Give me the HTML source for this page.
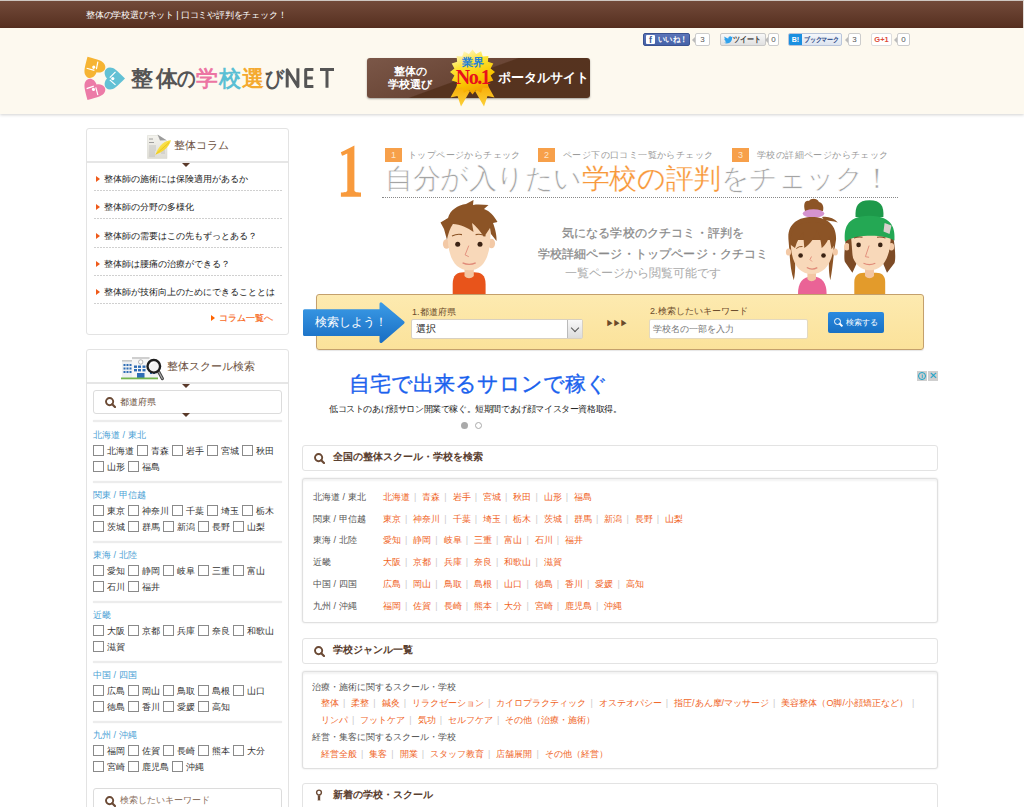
<!DOCTYPE html>
<html lang="ja"><head><meta charset="utf-8">
<style>
*{box-sizing:border-box;margin:0;padding:0}
html,body{width:1024px;height:807px;overflow:hidden;background:#fff;font-family:"Liberation Sans",sans-serif;color:#333}
.a{position:absolute;white-space:nowrap}
#topbar{position:absolute;left:0;top:0;width:1024px;height:28px;background:linear-gradient(#724a3a,#562f1f);border-top:1px solid #cdc6c1;border-right:1px solid #e0dbd6}
#topbar .t{position:absolute;left:86px;top:7.5px;font-size:9px;color:#fff;line-height:12px;letter-spacing:-0.2px}
#hdr{position:absolute;left:0;top:28px;width:1024px;height:86px;background:#fdf9ef;box-shadow:0 1px 3px rgba(0,0,0,.18)}
.logotxt{position:absolute;left:132px;top:64px;width:160px;height:30px;font-size:22px;font-weight:bold;line-height:30px;color:#555}
.banner{position:absolute;left:367px;top:58px;width:223px;height:40px;border-radius:3px;background:linear-gradient(160deg,#7b5748 0%,#6a4636 45%,#56331f 46%,#55331f 100%);box-shadow:0 1px 2px rgba(0,0,0,.35)}
.banner .l{position:absolute;left:21px;top:7px;width:44px;text-align:center;color:#fff;font-size:10.5px;font-weight:bold;line-height:13px}
.banner .r{position:absolute;left:131px;top:13px;color:#fff;font-size:12.5px;font-weight:bold;line-height:15px}
.sb{position:absolute;top:33px;height:13px;border-radius:2px;font-size:8px;font-weight:bold;line-height:11px;white-space:nowrap;overflow:hidden}
.cnt{position:absolute;top:33px;height:13px;border:1px solid #ccc;background:#fff;border-radius:2px;font-size:8px;color:#555;text-align:center;line-height:11px}
.cnt:before{content:"";position:absolute;left:-4px;top:3px;border:3px solid transparent;border-right-color:#bbb;border-left:0}

.box{position:absolute;left:86px;width:203px;border:1px solid #e3e3e3;border-radius:3px;background:#fff}
.boxh{position:absolute;left:0;top:0;width:201px;border-bottom:2px solid #e6e6e6}
.boxh .tri{position:absolute;left:95px;bottom:-6px;border:4px solid transparent;border-top:4px solid #5a3a2a;border-bottom:0}
.boxh .tt{position:absolute;font-size:11px;color:#6b5040;line-height:14px}
.col li{position:absolute;left:7px;width:188px;list-style:none;font-size:8.8px;color:#222;line-height:12px;height:1px;background:repeating-linear-gradient(90deg,#d0d0d0 0 2px,transparent 2px 3px)}
.arr{display:inline-block;border:3px solid transparent;border-left:4px solid #ef5a1a;border-right:0;margin:0 4px 0 1px;vertical-align:0}
.sbox{position:absolute;left:6px;width:189px;height:24px;border:1px solid #dcdcdc;border-radius:3px;background:#fff;font-size:9px;color:#6b5040;line-height:22px}
.region{position:absolute;left:6px;font-size:9px;color:#4b9fd5;line-height:12px}
.sep{position:absolute;left:6px;width:189px;height:2px;margin-top:1px;background:#ececec;box-shadow:0 0 1.5px #eee}
.cbrow{position:absolute;left:6px;font-size:9px;color:#333;line-height:12px;white-space:nowrap}
.cb{display:inline-block;width:11px;height:11px;border:1px solid #8a8a8a;vertical-align:-2px;margin-right:3px;background:#fff}
.cbrow span{margin-right:3px}
.mag{display:inline-block;position:relative;width:11px;height:11px}



.sq{position:absolute;top:148px;width:17px;height:14px;background:#f7a04a;color:#fde6cc;font-size:9px;line-height:14px;text-align:center;font-weight:normal}
.sqt{position:absolute;top:150px;font-size:9px;letter-spacing:0.4px;color:#999;line-height:11px}
.ttl{position:absolute;left:385px;top:163px;font-size:27.5px;letter-spacing:-0.45px;color:#a4a4a4;-webkit-text-stroke:0.6px #fff;line-height:32px;font-weight:normal}
.desc{position:absolute;left:500px;width:306px;text-align:center;font-size:12px;color:#8a8a8a;line-height:14px;font-weight:normal;-webkit-text-stroke:0.25px #8a8a8a;letter-spacing:0.15px}
.sbar{position:absolute;left:316px;top:294px;width:608px;height:56px;border:1px solid #c4a06c;border-radius:3px;background:linear-gradient(#fdeab0,#fbe29a);box-shadow:0 1px 1px rgba(0,0,0,.1)}
.lbl{position:absolute;font-size:9px;color:#6b4a2a;line-height:11px}

.sech{position:absolute;left:302px;width:636px;height:26px;border:1px solid #e3e3e3;border-radius:3px;background:#fff;font-size:10px;font-weight:bold;color:#5a4030;line-height:24px}
.sech .mag{position:absolute;left:11px;top:6.5px}
.sech .st{position:absolute;left:30px;top:-1px}
.secb{position:absolute;left:302px;width:636px;border:1px solid #e0e0e0;border-radius:3px;background:#fff;box-shadow:0 0 2px rgba(0,0,0,.12),inset 0 2px 2px rgba(0,0,0,.05)}
.prow{position:absolute;left:10px;font-size:9px;line-height:12px;white-space:nowrap}
.prow b{display:inline-block;width:70px;font-weight:normal;color:#555}
.lk{color:#f0641e}
.lk i{font-style:normal;color:#ccc;margin:0 6px 0 4px}
.glbl{position:absolute;left:9px;font-size:9px;color:#555;line-height:12px;white-space:nowrap}
.grow{position:absolute;left:18px;font-size:9px;line-height:12px;white-space:nowrap}
</style></head><body>
<div id="topbar"><div class="t">整体の学校選びネット | 口コミや評判をチェック！</div></div>
<div id="hdr"></div>

<!-- logo icon -->
<svg class="a" style="left:82px;top:54px" width="46" height="48" viewBox="0 0 46 48">
 <g transform="translate(18,24.4)">
  <g transform="rotate(0)"><path d="M7,0 C3,-4 4,-11 10,-11 C14,-11 17,-8 25,0 C17,8 14,11 10,11 C4,11 3,4 7,0 Z" fill="#62c1d5"/><path d="M15.5,-6.5 L9.8,-0.8 M9.8,1.5 L15.5,6.5" stroke="#fff" stroke-width="1.2" fill="none"/><circle cx="12.8" cy="0.2" r="1.6" fill="#fff"/></g>
  <g transform="rotate(-120)"><path d="M7,0 C3,-4 4,-11 10,-11 C14,-11 17,-8 25,0 C17,8 14,11 10,11 C4,11 3,4 7,0 Z" fill="#f6b433"/><path d="M15.5,-6.5 L9.8,-0.8 M9.8,1.5 L15.5,6.5" stroke="#fff" stroke-width="1.2" fill="none"/><circle cx="12.8" cy="0.2" r="1.6" fill="#fff"/></g>
  <g transform="rotate(120)"><path d="M7,0 C3,-4 4,-11 10,-11 C14,-11 17,-8 25,0 C17,8 14,11 10,11 C4,11 3,4 7,0 Z" fill="#ec7ba7"/><path d="M15.5,-6.5 L9.8,-0.8 M9.8,1.5 L15.5,6.5" stroke="#fff" stroke-width="1.2" fill="none"/><circle cx="12.8" cy="0.2" r="1.6" fill="#fff"/></g>
 </g>
</svg>
<div class="logotxt"><span style="position:absolute;left:-1.1px;top:0;color:#555">整</span><span style="position:absolute;left:23.5px;top:0;color:#555">体</span><span style="position:absolute;left:45.0px;top:0;color:#555;transform:scaleX(0.84);transform-origin:0 0">の</span><span style="position:absolute;left:63.5px;top:0;color:#ec75a3">学</span><span style="position:absolute;left:87.1px;top:0;color:#5bbfd4">校</span><span style="position:absolute;left:109.6px;top:0;color:#f4aa30">選</span><span style="position:absolute;left:133.2px;top:0;color:#555;transform:scaleX(0.86);transform-origin:0 0">び</span></div><svg class="a" style="left:280px;top:60px" width="60" height="32" viewBox="280 60 60 32"><g stroke="#555" stroke-width="3" fill="none" stroke-linecap="butt" stroke-linejoin="round"><path d="M287.2,87.5 V69.8 L297.9,86.6 V68.2"/><path d="M313.4,69.5 H305.7 V86.4 H313.4 M305.7,78 H312.8"/><path d="M320,69.5 H334 M327,69.5 V87.7"/></g></svg>

<!-- banner -->
<div class="banner">
  <div class="l">整体の<br>学校選び</div>
  <div class="r">ポータルサイト</div>
</div>
<svg class="a" style="left:440px;top:44px" width="64" height="68" viewBox="0 0 64 68">
  <defs><linearGradient id="gs" x1="0.2" y1="0" x2="0.6" y2="1"><stop offset="0" stop-color="#fffbe0"/><stop offset="0.35" stop-color="#fde233"/><stop offset="0.7" stop-color="#f9c400"/><stop offset="1" stop-color="#f39a00"/></linearGradient>
  <linearGradient id="gr" x1="0" y1="0" x2="0" y2="1"><stop offset="0" stop-color="#f7a800"/><stop offset="1" stop-color="#fcd23a"/></linearGradient></defs>
  <polygon points="18,40 10.5,53.5 17.5,52 21,62.5 30,47" fill="url(#gr)"/>
  <polygon points="47,40 54.5,53.5 47.5,52 44,62.5 35,47" fill="url(#gr)"/>
  <polygon points="32.5,5.5 36.1,9.9 41.1,7.2 42.8,12.6 48.4,12.1 47.9,17.7 53.3,19.4 50.6,24.4 55.0,28.0 50.6,31.6 53.3,36.6 47.9,38.3 48.4,43.9 42.8,43.4 41.1,48.8 36.1,46.1 32.5,50.5 28.9,46.1 23.9,48.8 22.2,43.4 16.6,43.9 17.1,38.3 11.7,36.6 14.4,31.6 10.0,28.0 14.4,24.4 11.7,19.4 17.1,17.7 16.6,12.1 22.2,12.6 23.9,7.2 28.9,9.9" fill="url(#gs)"/>
  <text x="32.5" y="21.5" style="font:bold 11px 'Liberation Sans'" fill="#1f80d8" text-anchor="middle">業界</text>
  <text x="32.5" y="39.5" style="font:bold 20px 'Liberation Serif'" fill="#e8101c" text-anchor="middle" letter-spacing="-1.5">No.1</text>
</svg>

<!-- social -->
<div class="sb" style="left:643px;width:47px;background:linear-gradient(#5b74b8,#4562a8);color:#fff;border:1px solid #3b5290"><span style="display:inline-block;width:9px;height:9px;background:#fff;color:#3b5998;font-size:9px;line-height:10px;text-align:center;margin:1px 3px 0 2px;vertical-align:top;border-radius:1px;font-weight:bold">f</span><span style="display:inline-block;transform:scaleX(0.92);transform-origin:0 0">いいね！</span></div>
<div class="cnt" style="left:695px;width:15px">3</div>
<div class="sb" style="left:720px;width:46px;background:linear-gradient(#f8f8f8,#e0e0e0);border:1px solid #c8c8c8;color:#333"><svg style="position:absolute;left:3px;top:2px" width="9" height="8" viewBox="0 0 24 20"><path d="M24 2.4c-.9.4-1.8.6-2.8.8 1-.6 1.8-1.6 2.2-2.7-1 .6-2 1-3.1 1.2C19.3.7 18 0 16.6 0c-2.7 0-4.9 2.2-4.9 4.9 0 .4 0 .8.1 1.1C7.7 5.8 4.1 3.9 1.7.9c-.4.7-.7 1.6-.7 2.5 0 1.7.9 3.2 2.2 4.1-.8 0-1.6-.2-2.2-.6v.1c0 2.4 1.7 4.4 3.9 4.8-.4.1-.8.2-1.3.2-.3 0-.6 0-.9-.1.6 2 2.4 3.4 4.6 3.4-1.7 1.3-3.8 2.1-6.1 2.1-.4 0-.8 0-1.2-.1 2.2 1.4 4.8 2.2 7.5 2.2 9.1 0 14-7.5 14-14v-.6c1-.7 1.8-1.6 2.5-2.5z" fill="#2ea1ec"/></svg><span style="position:absolute;left:12px;top:0;transform:scaleX(0.88);transform-origin:0 0">ツイート</span></div>
<div class="cnt" style="left:768px;width:11px">0</div>
<div class="sb" style="left:788px;width:54px;background:linear-gradient(#f5f7fb,#dde4ef);border:1px solid #b9c5da;color:#2b4a88;font-size:7px;letter-spacing:-0.3px"><span style="position:absolute;left:0;top:0;width:13px;height:11px;background:#1a8fe0;color:#fff;font-size:7px;line-height:11px;text-align:center;letter-spacing:0">B!</span><span style="position:absolute;left:15px;top:0;transform:scaleX(0.86);transform-origin:0 0">ブックマーク</span></div>
<div class="cnt" style="left:848px;width:13px">3</div>
<div class="sb" style="left:871px;width:21px;background:#fff;border:1px solid #ddd;color:#dd4b39;text-align:center;font-size:7.5px">G+1</div>
<div class="cnt" style="left:897px;width:13px">0</div>


<!-- column box -->
<div class="box col" style="top:128px;height:207px">
  <div class="boxh" style="height:34px"><div class="tri"></div>
    <svg class="a" style="left:60px;top:5px" width="25" height="26" viewBox="0 0 25 26">
      <defs><linearGradient id="pp" x1="0" y1="0" x2="0" y2="1"><stop offset="0" stop-color="#f4f3ee"/><stop offset="1" stop-color="#dedcd4"/></linearGradient>
      <linearGradient id="fy" x1="0" y1="0" x2="1" y2="1"><stop offset="0" stop-color="#fff27a"/><stop offset="1" stop-color="#efc400"/></linearGradient></defs>
      <path d="M0.5 1.5 L11 1.5 L20 7 L20 24.5 L0.5 24.5 Z" fill="url(#pp)" stroke="#d6d6cc" stroke-width="0.5"/>
      <path d="M10.5 0.5 L19.5 6.3 L13 6.5 Z" fill="#9c9c9c"/>
      <g stroke="#8a8a8a" stroke-width="0.8"><path d="M2 5 h4"/><path d="M2 8.5 h5"/></g>
      <g stroke="#b4b4b4" stroke-width="0.7"><path d="M2 12 h7 M2 14 h7 M2 16 h7 M2 18 h6 M2 20 h6 M2 22 h6 M14 17 h4 M14 19 h4"/></g>
      <path d="M24 6.3 C18 6.5 12 11 8.6 20.5 C14 19 22 14 24 6.3 Z" fill="url(#fy)"/>
      <path d="M22 8.5 L8.6 20.5" stroke="#e0b000" stroke-width="0.5"/>
    </svg>
    <div class="tt" style="left:87px;top:9px">整体コラム</div>
  </div>
  <ul>
    <li style="top:61px"><div style="position:absolute;top:-17px;left:1px"><i class="arr"></i>整体師の施術には保険適用があるか</div></li>
    <li style="top:89px"><div style="position:absolute;top:-17px;left:1px"><i class="arr"></i>整体師の分野の多様化</div></li>
    <li style="top:118px"><div style="position:absolute;top:-17px;left:1px"><i class="arr"></i>整体師の需要はこの先もずっとある？</div></li>
    <li style="top:146px"><div style="position:absolute;top:-17px;left:1px"><i class="arr"></i>整体師は腰痛の治療ができる？</div></li>
    <li style="top:174px"><div style="position:absolute;top:-17px;left:1px"><i class="arr"></i>整体師が技術向上のためにできることとは</div></li>
  </ul>
  <div class="a" style="left:123px;top:183px;font-size:9px;color:#f86a1e;line-height:12px;-webkit-text-stroke:0.2px #f86a1e"><i class="arr" style="border-left-color:#ff6400"></i>コラム一覧へ</div>
</div>

<!-- school search box -->
<div class="box" style="top:349px;height:480px">
  <div class="boxh" style="height:34px"><div class="tri"></div>
    <svg class="a" style="left:34px;top:6px" width="43" height="25" viewBox="0 0 43 25">
      <rect x="1" y="4" width="10.5" height="18" fill="#eef0f2"/><rect x="1" y="4" width="10.5" height="1.6" fill="#c8c8c8"/>
      <rect x="28" y="8" width="9" height="14" fill="#eef0f2"/>
      <rect x="11" y="1" width="17.5" height="21" fill="#f6f6f6"/><rect x="11" y="1" width="17.5" height="2" fill="#cfcfcf"/>
      <circle cx="19.7" cy="6" r="2.2" fill="#fff" stroke="#888" stroke-width="0.6"/>
      <g fill="#2f6db5"><rect x="2.5" y="8" width="2" height="2"/><rect x="2.5" y="11.5" width="2" height="2"/><rect x="2.5" y="15" width="2" height="2"/><rect x="5.5" y="8" width="2" height="2"/><rect x="5.5" y="11.5" width="2" height="2"/><rect x="5.5" y="15" width="2" height="2"/><rect x="8.5" y="8" width="2" height="2"/><rect x="8.5" y="11.5" width="2" height="2"/><rect x="8.5" y="15" width="2" height="2"/><rect x="13" y="9.5" width="3" height="2.4"/><rect x="13" y="13" width="3" height="2.4"/><rect x="17" y="9.5" width="3" height="2.4"/><rect x="17" y="13" width="3" height="2.4"/><rect x="21.5" y="9.5" width="3" height="2.4"/><rect x="21.5" y="13" width="3" height="2.4"/><rect x="29" y="12" width="2" height="2"/><rect x="29" y="16" width="2" height="2"/><rect x="32" y="12" width="2" height="2"/><rect x="32" y="16" width="2" height="2"/><rect x="16" y="17" width="7.5" height="5"/></g>
      <rect x="0" y="21.5" width="37" height="1.8" fill="#74b54e"/>
      <path d="M37 14.5 L41.3 22.5" stroke="#444" stroke-width="3.2" stroke-linecap="round"/>
      <path d="M37 14.5 L41.3 22.5" stroke="#aaa" stroke-width="1.2" stroke-linecap="round"/>
      <circle cx="32.8" cy="10.3" r="6.3" fill="#f2f2f2" stroke="#1e1e1e" stroke-width="2.4"/>
      <path d="M29.5 8.5 Q31 6.3 33.5 6.2" stroke="#fff" stroke-width="1.2" fill="none"/>
    </svg>
    <div class="tt" style="left:80px;top:9px">整体スクール検索</div>
  </div>
  <div class="sbox" style="top:40px"><span style="position:absolute;left:11px;top:6px" class="mag"><svg width="11" height="11" viewBox="0 0 11 11" style="display:block"><circle cx="4.6" cy="4.6" r="3.6" fill="none" stroke="#6b4a35" stroke-width="1.9"/><path d="M7.2 7.2 L10 10" stroke="#6b4a35" stroke-width="2.2" stroke-linecap="round"/></svg></span><span style="position:absolute;left:26px;top:0">都道府県</span></div>
  <div class="a" style="left:95px;top:63px;border:4px solid transparent;border-top:4px solid #5a3a2a;border-bottom:0"></div>
  <div class="sep" style="top:69px"></div>
  <div class="region" style="top:79px">北海道 / 東北</div>
  <div class="cbrow" style="top:95px"><i class="cb"></i><span>北海道</span><i class="cb"></i><span>青森</span><i class="cb"></i><span>岩手</span><i class="cb"></i><span>宮城</span><i class="cb"></i><span>秋田</span></div>
  <div class="cbrow" style="top:111px"><i class="cb"></i><span>山形</span><i class="cb"></i><span>福島</span></div>
  <div class="sep" style="top:130px"></div>
  <div class="region" style="top:139px">関東 / 甲信越</div>
  <div class="cbrow" style="top:155px"><i class="cb"></i><span>東京</span><i class="cb"></i><span>神奈川</span><i class="cb"></i><span>千葉</span><i class="cb"></i><span>埼玉</span><i class="cb"></i><span>栃木</span></div>
  <div class="cbrow" style="top:171px"><i class="cb"></i><span>茨城</span><i class="cb"></i><span>群馬</span><i class="cb"></i><span>新潟</span><i class="cb"></i><span>長野</span><i class="cb"></i><span>山梨</span></div>
  <div class="sep" style="top:190px"></div>
  <div class="region" style="top:199px">東海 / 北陸</div>
  <div class="cbrow" style="top:215px"><i class="cb"></i><span>愛知</span><i class="cb"></i><span>静岡</span><i class="cb"></i><span>岐阜</span><i class="cb"></i><span>三重</span><i class="cb"></i><span>富山</span></div>
  <div class="cbrow" style="top:231px"><i class="cb"></i><span>石川</span><i class="cb"></i><span>福井</span></div>
  <div class="sep" style="top:250px"></div>
  <div class="region" style="top:259px">近畿</div>
  <div class="cbrow" style="top:275px"><i class="cb"></i><span>大阪</span><i class="cb"></i><span>京都</span><i class="cb"></i><span>兵庫</span><i class="cb"></i><span>奈良</span><i class="cb"></i><span>和歌山</span></div>
  <div class="cbrow" style="top:291px"><i class="cb"></i><span>滋賀</span></div>
  <div class="sep" style="top:310px"></div>
  <div class="region" style="top:319px">中国 / 四国</div>
  <div class="cbrow" style="top:335px"><i class="cb"></i><span>広島</span><i class="cb"></i><span>岡山</span><i class="cb"></i><span>鳥取</span><i class="cb"></i><span>島根</span><i class="cb"></i><span>山口</span></div>
  <div class="cbrow" style="top:351px"><i class="cb"></i><span>徳島</span><i class="cb"></i><span>香川</span><i class="cb"></i><span>愛媛</span><i class="cb"></i><span>高知</span></div>
  <div class="sep" style="top:370px"></div>
  <div class="region" style="top:379px">九州 / 沖縄</div>
  <div class="cbrow" style="top:395px"><i class="cb"></i><span>福岡</span><i class="cb"></i><span>佐賀</span><i class="cb"></i><span>長崎</span><i class="cb"></i><span>熊本</span><i class="cb"></i><span>大分</span></div>
  <div class="cbrow" style="top:411px"><i class="cb"></i><span>宮崎</span><i class="cb"></i><span>鹿児島</span><i class="cb"></i><span>沖縄</span></div>
  <div class="sbox" style="top:438px;height:30px"><span style="position:absolute;left:11px;top:7px" class="mag"><svg width="11" height="11" viewBox="0 0 11 11" style="display:block"><circle cx="4.6" cy="4.6" r="3.6" fill="none" stroke="#6b4a35" stroke-width="1.9"/><path d="M7.2 7.2 L10 10" stroke="#6b4a35" stroke-width="2.2" stroke-linecap="round"/></svg></span><span style="position:absolute;left:26px;top:0px;color:#8a7060">検索したいキーワード</span></div>
</div>

<!-- hero -->
<svg class="a" style="left:335px;top:140px" width="30" height="60" viewBox="0 0 30 60"><path d="M19.4,5.4 L19.4,50 C19.4,52 21,52.3 26,52.5 L26,56.8 L5.9,56.8 L5.9,52.5 C11,52.3 12.3,52 12.3,50 L12.3,13.5 C10,14.5 8,15.5 7,15.8 L5.8,12.3 C10,10 15,8 19.4,5.4 Z" fill="#f89a3c"/></svg>
<div class="sq" style="left:385px">1</div><div class="sqt" style="left:408px">トップページからチェック</div>
<div class="sq" style="left:538px">2</div><div class="sqt" style="left:563px">ページ下の口コミ一覧からチェック</div>
<div class="sq" style="left:732px">3</div><div class="sqt" style="left:757px">学校の詳細ページからチェック</div>
<div class="ttl a">自分が入りたい<span style="color:#f8983a;-webkit-text-stroke:0.2px #fff">学校の評判</span>をチェック！</div>
<div class="a" style="left:382px;top:197px;width:516px;border-top:1px dotted #888"></div>

<div class="desc a" style="top:226px">気になる学校のクチコミ・評判を</div>
<div class="desc a" style="top:247px">学校詳細ページ・トップページ・クチコミ</div>
<div class="desc a" style="top:266px;left:490px;color:#aaa;-webkit-text-stroke:0;letter-spacing:0">一覧ページから閲覧可能です</div>

<!-- boy -->
<svg class="a" style="left:436px;top:196px" width="66" height="98" viewBox="0 0 66 98">
  <path d="M16.7,98 L16.7,88 C16.7,79 21,76.2 28,76.2 L38,76.2 C45,76.2 49.6,79 49.6,88 L49.6,98 Z" fill="#e8541b"/>
  <path d="M28.5,70 L37.8,70 L37.8,80 C35,83 31,83 28.5,80 Z" fill="#f3c6a3"/>
  <ellipse cx="10.5" cy="48" rx="3.6" ry="4.8" fill="#f3c9a6"/>
  <ellipse cx="55.5" cy="47.5" rx="3.6" ry="4.8" fill="#f3c9a6"/>
  <path d="M11.5,34 C11,58 17,74.3 33.3,74.3 C49,74.3 55,58 54.5,34 C50,22 16,22 11.5,34 Z" fill="#f8d8b9"/>
  <path d="M11,44 L8,33 L4.5,26.5 L12,22 C14,14 22,9 30,8 L37.5,4 L37,9 C43,8 48,9 52.5,9 L48,13 C54,15 58,20 61.5,26 L57,27 C59,32 61,40 60.5,45 L55,38 L54,32 L48,41 C45,36 40,30 36,27 L37.5,36 C32,32 24,28 17,28 C14,32 12,38 11,44 Z" fill="#8c5426"/>
  <circle cx="21.7" cy="48.3" r="2.5" fill="#3b2314"/><circle cx="44" cy="48.3" r="2.5" fill="#3b2314"/>
  <path d="M16,40 Q21,37.5 26,38.6 M39.6,38.6 Q45,37.5 49.6,40" stroke="#8c5426" stroke-width="1.1" fill="none"/>
  <path d="M32.8,49.6 L29.1,58.9 L32.8,60.7" stroke="#e08a78" stroke-width="0.9" fill="none"/>
  <path d="M26.6,66.9 Q33.2,70 39.7,66.9" stroke="#e08a78" stroke-width="1.2" fill="none"/>
</svg>
<!-- girl -->
<svg class="a" style="left:782px;top:196px" width="60" height="98" viewBox="0 0 60 98">
  <path d="M16,98 C16,87 20,80.5 30.3,80.5 C40.6,80.5 44.6,87 44.6,98 Z" fill="#ea6396"/>
  <path d="M25.4,74 L34,74 L34,83 C31,86 28,86 25.4,83 Z" fill="#f3c6a3"/>
  <path d="M23,15 C21,8 23,4 27,5 C29,2 35,2 37,6 C41,7 42,11 41,15 Z" fill="#8c5426"/>
  <ellipse cx="31.5" cy="17.5" rx="10.8" ry="4.3" fill="#d493cf"/>
  <path d="M6.5,44 C5,28 16,21 30,21 C44,21 55,28 54,44 L52,56 C51,66 50,76 48.3,84.3 C46,74 47,62 47.5,54 L13,54 C13,62 14,74 11.8,84.3 C9,76 8,66 7.5,56 Z" fill="#8c5426"/>
  <path d="M40,21 C46,20 52,22 55.8,26.6 C51,25 46,24.5 42,24 Z" fill="#8c5426"/>
  <ellipse cx="6.5" cy="56" rx="2.6" ry="3.6" fill="#f3c9a6"/><ellipse cx="53.3" cy="56" rx="2.6" ry="3.6" fill="#f3c9a6"/>
  <path d="M8.7,44 C8.5,66 16,78 29.7,78 C43,78 52,66 52,44 Z" fill="#f8d8b9"/>
  <path d="M7.5,48 C8,34 16,26 30,26 C44,26 53,34 53,48 L49.6,53.3 L47,40 C46,46 42,50 39.7,52 C39,44 37,38 35,34 C33,42 28,48 22.3,52 L21,36 C18,40 15,45 13,52 Z" fill="#8c5426"/>
  <circle cx="18.6" cy="59.5" r="2.3" fill="#3b2314"/><circle cx="41.5" cy="59.5" r="2.3" fill="#3b2314"/>
  <path d="M14.3,52.5 Q17,50 20.5,50.5" stroke="#8c5426" stroke-width="1" fill="none"/>
  <path d="M29.5,60.5 L28,63.5 L30,65.5" stroke="#e08a78" stroke-width="0.9" fill="none"/>
  <path d="M24.8,71.6 Q30,74.5 35.3,71.6" stroke="#e08a78" stroke-width="1.2" fill="none"/>
</svg>
<!-- girl with hat -->
<svg class="a" style="left:840px;top:196px" width="60" height="98" viewBox="0 0 60 98">
  <path d="M14.3,98 L14.3,86 C14.3,80 18,76.8 24,76.8 L36,76.8 C42,76.8 45.2,80 45.2,86 L45.2,98 Z" fill="#e39b2b"/>
  <path d="M25,72 L34,72 L34,80 C31,83 28,83 25,80 Z" fill="#f3c6a3"/>
  <path d="M6,42 C4,56 4,64 5,66 L12.4,76.8 L20,60 L40,60 L47,76.8 L54.5,67 C56,62 55,52 53.5,42 Z" fill="#7d4b26"/>
  <ellipse cx="6.8" cy="50.8" rx="2.8" ry="3.8" fill="#f3c9a6"/><ellipse cx="51.4" cy="50.8" rx="2.8" ry="3.8" fill="#f3c9a6"/>
  <path d="M9.3,38 C9,62 17,74.3 29.7,74.3 C43,74.3 50.8,62 50.8,38 Z" fill="#f8d8b9"/>
  <path d="M9,40 L11,40 L13.5,72 C11,68 9.5,60 9,54 Z" fill="#7d4b26"/>
  <path d="M15.5,21 C15,10 18,4.3 29.5,4.3 C41,4.3 44,10 43.4,21 Z" fill="#1d994a"/>
  <path d="M5,45.8 C4,34 5,20 29.5,19.8 C54,20 55,34 54.5,44.6 C44,38 16,38 5,45.8 Z" fill="#24a854"/>
  <path d="M44.6,27 L51.5,29.5 L49.5,38 L43.5,35.5 Z" fill="#d9d0cc"/>
  <path d="M14,42 Q18,40.5 22.5,41.2 M37,41.2 Q41.5,40.5 45.5,42" stroke="#7d4b26" stroke-width="1.1" fill="none"/>
  <circle cx="18.6" cy="48.9" r="2.3" fill="#3b2314"/><circle cx="40.3" cy="48.9" r="2.3" fill="#3b2314"/>
  <path d="M29.1,49.6 L25.4,60.7 L29.1,61.3" stroke="#e08a78" stroke-width="0.9" fill="none"/>
  <path d="M23.5,67.3 Q29.4,70 35.3,67.3" stroke="#e08a78" stroke-width="1.2" fill="none"/>
</svg>

<!-- search bar -->
<div class="sbar"></div>
<svg class="a" style="left:303px;top:302px" width="102" height="41" viewBox="0 0 102 41">
  <defs><linearGradient id="bg1" x1="0" y1="0" x2="0" y2="1"><stop offset="0" stop-color="#3a9ae6"/><stop offset="1" stop-color="#1a6fc4"/></linearGradient></defs>
  <path d="M1.5 8.8 L78 8.8 L78 1.8 L100 20.5 L78 39.5 L78 32.5 L1.5 32.5 Z" fill="url(#bg1)" stroke="url(#bg1)" stroke-width="3" stroke-linejoin="round"/>
</svg>
<div class="a" style="left:315px;top:314px;font-size:11.5px;color:#fff;line-height:16px">検索しよう！</div>
<div class="lbl a" style="left:412px;top:307px">1.都道府県</div>
<div class="a" style="left:411px;top:319px;width:172px;height:20px;background:#fff;border:1px solid #d8d0c0;border-radius:2px;font-size:10px;color:#222;line-height:18px;padding-left:4px">選択
  <div style="position:absolute;right:0;top:0;width:15px;height:18px;background:linear-gradient(#f8f8f8,#dcdcdc);border-left:1px solid #bbb"><div style="position:absolute;left:4px;top:5px;width:6px;height:6px;border-right:1.5px solid #555;border-bottom:1.5px solid #555;transform:rotate(45deg)"></div></div>
</div>
<div class="a" style="left:606px;top:319px;font-size:8px;color:#6b4a2a;line-height:9px;letter-spacing:-1px">&#9654;&#9654;&#9654;</div>
<div class="lbl a" style="left:650px;top:306px">2.検索したいキーワード</div>
<div class="a" style="left:649px;top:319px;width:159px;height:20px;background:#fff;border:1px solid #e3d9c0;border-radius:2px;font-size:9px;color:#777;line-height:18px;padding-left:3px">学校名の一部を入力</div>
<div class="a" style="left:828px;top:312px;width:56px;height:21px;border-radius:2px;background:linear-gradient(#2b8ae0,#1870c4);color:#fff;font-size:8px;line-height:21px;padding-left:18px">検索する
  <span style="position:absolute;left:6px;top:6px;width:7px;height:7px;border:1.6px solid #fff;border-radius:50%"></span><span style="position:absolute;left:12px;top:11px;width:1.8px;height:4px;background:#fff;transform:rotate(-45deg)"></span>
</div>

<!-- ad -->
<div class="a" style="left:349px;top:371px;font-size:21px;color:#1a62ee;line-height:26px;font-weight:normal;-webkit-text-stroke:0.35px #1a62ee">自宅で出来るサロンで稼ぐ</div>
<div class="a" style="left:329px;top:403px;font-size:9px;color:#222;line-height:12px;letter-spacing:-0.4px">低コストのあげ顔サロン開業で稼ぐ。短期間であげ顔マイスター資格取得。</div>
<div class="a" style="left:461px;top:422px;width:7px;height:7px;border-radius:50%;background:#aaa"></div>
<div class="a" style="left:475px;top:422px;width:7px;height:7px;border-radius:50%;border:1px solid #aaa"></div>
<div class="a" style="left:917px;top:371px;width:10px;height:10px;background:#cfcfcf"><div style="position:absolute;left:1px;top:1px;width:8px;height:8px;border:1px solid #1aa3c8;border-radius:50%;font-size:6px;line-height:6px;text-align:center;color:#1aa3c8;font-weight:bold">i</div></div>
<div class="a" style="left:928px;top:371px;width:10px;height:10px;background:#cfcfcf;color:#1aa3c8;font-size:10px;line-height:10px;text-align:center">&#10005;</div>

<!-- school search section -->
<div class="sech" style="top:445px"><span class="mag"><svg width="11" height="11" viewBox="0 0 11 11" style="display:block"><circle cx="4.6" cy="4.6" r="3.6" fill="none" stroke="#6b4a35" stroke-width="1.9"/><path d="M7.2 7.2 L10 10" stroke="#6b4a35" stroke-width="2.2" stroke-linecap="round"/></svg></span><span class="st">全国の整体スクール・学校を検索</span></div>
<div class="secb" style="top:478px;height:145px">
  <div class="prow" style="top:12px"><b>北海道 / 東北</b><span class="lk">北海道<i>|</i>青森<i>|</i>岩手<i>|</i>宮城<i>|</i>秋田<i>|</i>山形<i>|</i>福島</span></div>
  <div class="prow" style="top:34px"><b>関東 / 甲信越</b><span class="lk">東京<i>|</i>神奈川<i>|</i>千葉<i>|</i>埼玉<i>|</i>栃木<i>|</i>茨城<i>|</i>群馬<i>|</i>新潟<i>|</i>長野<i>|</i>山梨</span></div>
  <div class="prow" style="top:55px"><b>東海 / 北陸</b><span class="lk">愛知<i>|</i>静岡<i>|</i>岐阜<i>|</i>三重<i>|</i>富山<i>|</i>石川<i>|</i>福井</span></div>
  <div class="prow" style="top:77px"><b>近畿</b><span class="lk">大阪<i>|</i>京都<i>|</i>兵庫<i>|</i>奈良<i>|</i>和歌山<i>|</i>滋賀</span></div>
  <div class="prow" style="top:99px"><b>中国 / 四国</b><span class="lk">広島<i>|</i>岡山<i>|</i>鳥取<i>|</i>島根<i>|</i>山口<i>|</i>徳島<i>|</i>香川<i>|</i>愛媛<i>|</i>高知</span></div>
  <div class="prow" style="top:121px"><b>九州 / 沖縄</b><span class="lk">福岡<i>|</i>佐賀<i>|</i>長崎<i>|</i>熊本<i>|</i>大分<i>|</i>宮崎<i>|</i>鹿児島<i>|</i>沖縄</span></div>
</div>

<!-- genre section -->
<div class="sech" style="top:638px"><span class="mag"><svg width="11" height="11" viewBox="0 0 11 11" style="display:block"><circle cx="4.6" cy="4.6" r="3.6" fill="none" stroke="#6b4a35" stroke-width="1.9"/><path d="M7.2 7.2 L10 10" stroke="#6b4a35" stroke-width="2.2" stroke-linecap="round"/></svg></span><span class="st">学校ジャンル一覧</span></div>
<div class="secb" style="top:671px;height:98px">
  <div class="glbl" style="top:9px">治療・施術に関するスクール・学校</div>
  <div class="grow lk" style="top:25px">整体<i>|</i>柔整<i>|</i>鍼灸<i>|</i>リラクゼーション<i>|</i>カイロプラクティック<i>|</i>オステオパシー<i>|</i>指圧/あん摩/マッサージ<i>|</i>美容整体（O脚/小顔矯正など）<i>|</i></div>
  <div class="grow lk" style="top:42px">リンパ<i>|</i>フットケア<i>|</i>気功<i>|</i>セルフケア<i>|</i>その他（治療・施術）</div>
  <div class="glbl" style="top:59px">経営・集客に関するスクール・学校</div>
  <div class="grow lk" style="top:76px">経営全般<i>|</i>集客<i>|</i>開業<i>|</i>スタッフ教育<i>|</i>店舗展開<i>|</i>その他（経営）</div>
</div>

<!-- new schools -->
<div class="sech" style="top:783px;height:30px"><svg class="a" style="left:12px;top:5px" width="8" height="13" viewBox="0 0 8 13"><circle cx="4" cy="3.5" r="2.4" fill="none" stroke="#6b4a35" stroke-width="1.4"/><path d="M2.8 6.3 L5.2 6.3 L5.2 12 L4 11 L2.8 12 Z" fill="#6b4a35"/></svg><span class="st" style="top:-1px">新着の学校・スクール</span></div>
</body></html>
